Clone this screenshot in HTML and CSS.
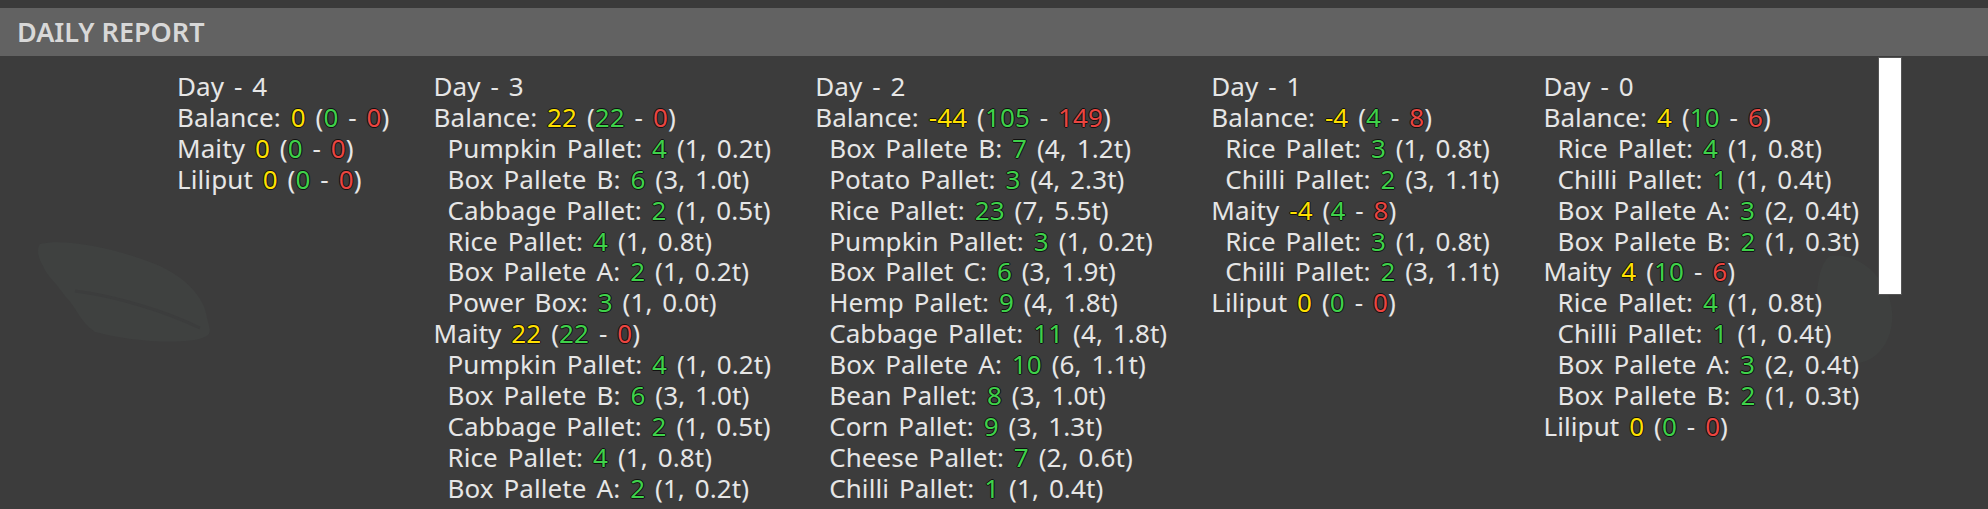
FILE: index.html
```html
<!DOCTYPE html>
<html>
<head>
    <title>Daily Report</title>
    <link rel="stylesheet" href="styles.css">
</head>
<body>
    <div class="topbar"></div>
    <div class="panel-header">DAILY REPORT</div>

    <div class="panel-body">
        <!-- faint background decoration -->
        <svg class="deco deco-left" width="200" height="120" viewBox="0 0 200 120">
            <path d="M5 8 C30 2 80 12 120 28 C150 40 170 62 172 82 C175 95 180 100 160 104 C130 108 90 104 60 96 C45 86 42 72 30 60 C22 48 12 40 8 30 C2 20 2 12 5 8 Z" fill="#3f4140"/>
            <path d="M40 55 C80 60 130 75 165 92" stroke="#3c3d3d" stroke-width="3" fill="none"/>
        </svg>
        <svg class="deco deco-right" width="100" height="120" viewBox="0 0 100 120">
            <path d="M30 5 C60 0 90 30 92 60 C95 90 75 115 50 112 C28 105 12 80 16 50 C18 30 20 12 30 5 Z" fill="#3e403f"/>
        </svg>

        <div class="columns">
            <div class="day">
                <div class="line title">Day - 4</div>
                <div class="line">Balance: <span class="bal">0</span> (<span class="in">0</span> - <span class="out">0</span>)</div>
                <div class="line">Maity <span class="bal">0</span> (<span class="in">0</span> - <span class="out">0</span>)</div>
                <div class="line">Liliput <span class="bal">0</span> (<span class="in">0</span> - <span class="out">0</span>)</div>
            </div>

            <div class="day">
                <div class="line title">Day - 3</div>
                <div class="line">Balance: <span class="bal">22</span> (<span class="in">22</span> - <span class="out">0</span>)</div>
                <div class="line item">Pumpkin Pallet: <span class="in">4</span> (1, 0.2t)</div>
                <div class="line item">Box Pallete B: <span class="in">6</span> (3, 1.0t)</div>
                <div class="line item">Cabbage Pallet: <span class="in">2</span> (1, 0.5t)</div>
                <div class="line item">Rice Pallet: <span class="in">4</span> (1, 0.8t)</div>
                <div class="line item">Box Pallete A: <span class="in">2</span> (1, 0.2t)</div>
                <div class="line item">Power Box: <span class="in">3</span> (1, 0.0t)</div>
                <div class="line">Maity <span class="bal">22</span> (<span class="in">22</span> - <span class="out">0</span>)</div>
                <div class="line item">Pumpkin Pallet: <span class="in">4</span> (1, 0.2t)</div>
                <div class="line item">Box Pallete B: <span class="in">6</span> (3, 1.0t)</div>
                <div class="line item">Cabbage Pallet: <span class="in">2</span> (1, 0.5t)</div>
                <div class="line item">Rice Pallet: <span class="in">4</span> (1, 0.8t)</div>
                <div class="line item">Box Pallete A: <span class="in">2</span> (1, 0.2t)</div>
            </div>

            <div class="day">
                <div class="line title">Day - 2</div>
                <div class="line">Balance: <span class="bal">-44</span> (<span class="in">105</span> - <span class="out">149</span>)</div>
                <div class="line item">Box Pallete B: <span class="in">7</span> (4, 1.2t)</div>
                <div class="line item">Potato Pallet: <span class="in">3</span> (4, 2.3t)</div>
                <div class="line item">Rice Pallet: <span class="in">23</span> (7, 5.5t)</div>
                <div class="line item">Pumpkin Pallet: <span class="in">3</span> (1, 0.2t)</div>
                <div class="line item">Box Pallet C: <span class="in">6</span> (3, 1.9t)</div>
                <div class="line item">Hemp Pallet: <span class="in">9</span> (4, 1.8t)</div>
                <div class="line item">Cabbage Pallet: <span class="in">11</span> (4, 1.8t)</div>
                <div class="line item">Box Pallete A: <span class="in">10</span> (6, 1.1t)</div>
                <div class="line item">Bean Pallet: <span class="in">8</span> (3, 1.0t)</div>
                <div class="line item">Corn Pallet: <span class="in">9</span> (3, 1.3t)</div>
                <div class="line item">Cheese Pallet: <span class="in">7</span> (2, 0.6t)</div>
                <div class="line item">Chilli Pallet: <span class="in">1</span> (1, 0.4t)</div>
            </div>

            <div class="day">
                <div class="line title">Day - 1</div>
                <div class="line">Balance: <span class="bal">-4</span> (<span class="in">4</span> - <span class="out">8</span>)</div>
                <div class="line item">Rice Pallet: <span class="in">3</span> (1, 0.8t)</div>
                <div class="line item">Chilli Pallet: <span class="in">2</span> (3, 1.1t)</div>
                <div class="line">Maity <span class="bal">-4</span> (<span class="in">4</span> - <span class="out">8</span>)</div>
                <div class="line item">Rice Pallet: <span class="in">3</span> (1, 0.8t)</div>
                <div class="line item">Chilli Pallet: <span class="in">2</span> (3, 1.1t)</div>
                <div class="line">Liliput <span class="bal">0</span> (<span class="in">0</span> - <span class="out">0</span>)</div>
            </div>

            <div class="day">
                <div class="line title">Day - 0</div>
                <div class="line">Balance: <span class="bal">4</span> (<span class="in">10</span> - <span class="out">6</span>)</div>
                <div class="line item">Rice Pallet: <span class="in">4</span> (1, 0.8t)</div>
                <div class="line item">Chilli Pallet: <span class="in">1</span> (1, 0.4t)</div>
                <div class="line item">Box Pallete A: <span class="in">3</span> (2, 0.4t)</div>
                <div class="line item">Box Pallete B: <span class="in">2</span> (1, 0.3t)</div>
                <div class="line">Maity <span class="bal">4</span> (<span class="in">10</span> - <span class="out">6</span>)</div>
                <div class="line item">Rice Pallet: <span class="in">4</span> (1, 0.8t)</div>
                <div class="line item">Chilli Pallet: <span class="in">1</span> (1, 0.4t)</div>
                <div class="line item">Box Pallete A: <span class="in">3</span> (2, 0.4t)</div>
                <div class="line item">Box Pallete B: <span class="in">2</span> (1, 0.3t)</div>
                <div class="line">Liliput <span class="bal">0</span> (<span class="in">0</span> - <span class="out">0</span>)</div>
            </div>
        </div>

        <div class="scrollbar"></div>
    </div>
</body>
</html>
```

FILE: styles.css
```css
:root {
    --bg-color: #3c3c3c;
    --header-bg: #626262;
    --text-color: #e6e6e6;
    --yellow: #ffe000;
    --green: #3fd14a;
    --red: #ea4540;
}

* {
    margin: 0;
    padding: 0;
    box-sizing: border-box;
}

body {
    background-color: var(--bg-color);
    height: 100vh;
    overflow: hidden;
    font-family: "Noto Sans", "Open Sans", sans-serif;
    color: var(--text-color);
}

/* ========== Header ========== */
.topbar {
    height: 8px;
    background-color: #3a3a3a;
}

.panel-header {
    height: 48px;
    background-color: var(--header-bg);
    color: #d8d8d8;
    font-size: 27px;
    font-weight: 600;
    line-height: 48px;
    padding-left: 17px;
}

/* ========== Report body ========== */
.panel-body {
    position: relative;
    display: flex;
    height: calc(100vh - 56px);
    overflow: hidden;
}

.deco {
    position: absolute;
    z-index: 0;
}

.deco-left {
    left: 35px;
    top: 180px;
}

.deco-right {
    left: 1800px;
    top: 195px;
}

.columns {
    flex: 1;
    display: flex;
    gap: 44px;
    padding: 15px 0 0 177px;
    position: relative;
    z-index: 1;
}

.line {
    font-size: 26px;
    line-height: 30.9px;
    letter-spacing: 0.1px;
    word-spacing: 3px;
    white-space: nowrap;
}

.item {
    padding-left: 14px;
}

.bal,
.in,
.out {
    text-shadow: -1px 0 #111, 1px 0 #111, 0 -1px #111, 0 1px #111;
}

.bal { color: var(--yellow); }
.in { color: var(--green); }
.out { color: var(--red); }

.scrollbar {
    width: 24px;
    height: 238px;
    margin: 1px 86px 0 0;
    background-color: #ffffff;
    border: 1px solid #555;
    position: relative;
    z-index: 1;
}
```
